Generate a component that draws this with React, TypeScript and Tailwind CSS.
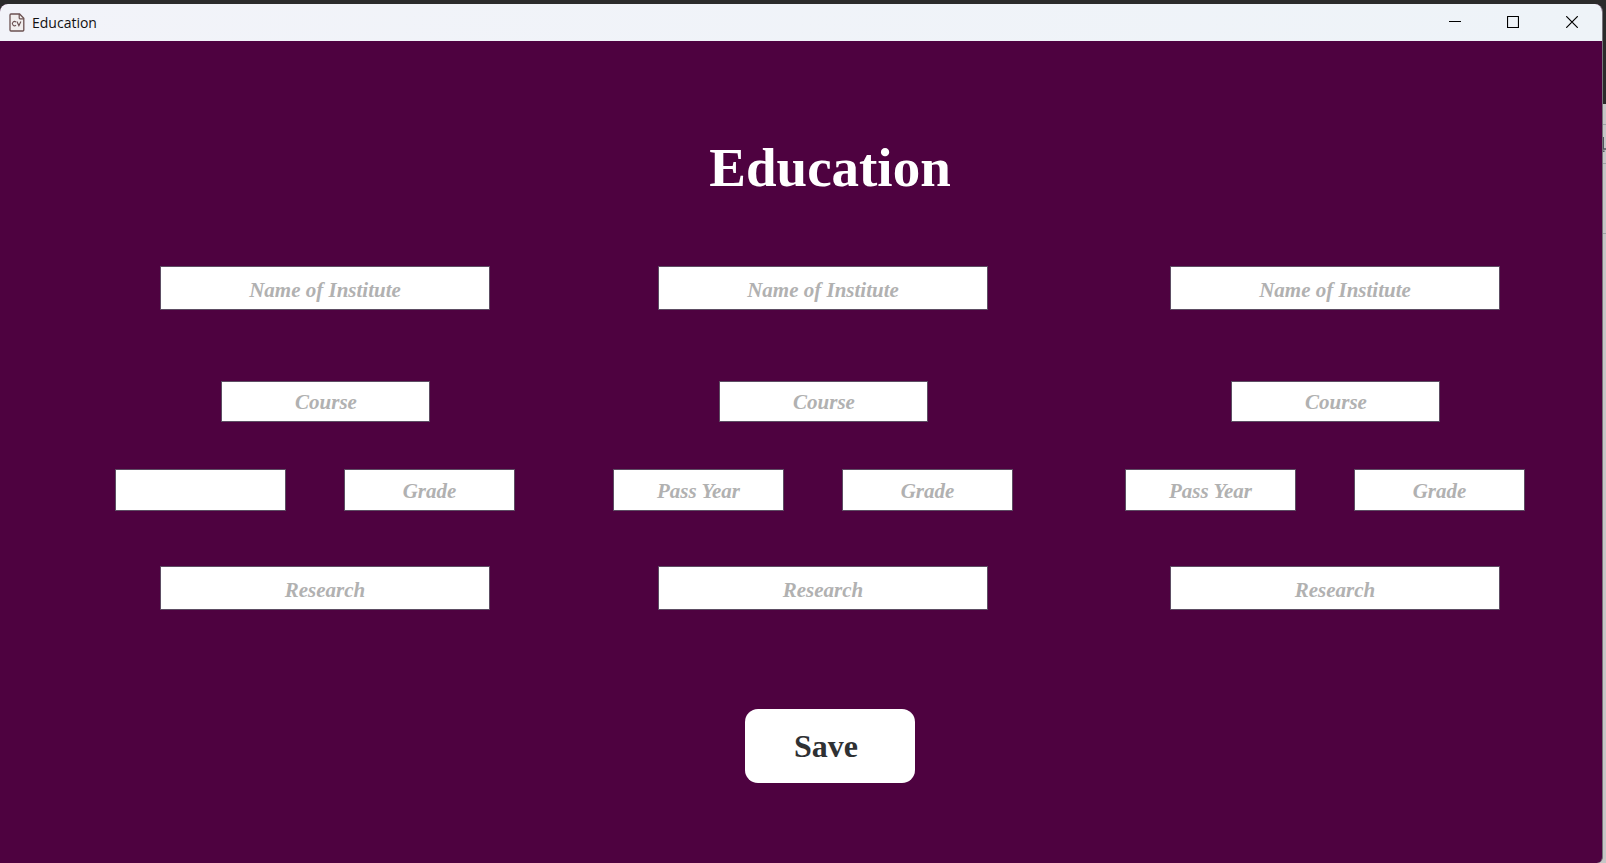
import { useState } from "react";
import type { InputHTMLAttributes } from "react";

type FieldProps = InputHTMLAttributes<HTMLInputElement> & { label: string };

function Field({ label, className = "", ...rest }: FieldProps) {
  return (
    <input
      type="text"
      aria-label={label}
      placeholder={label}
      className={`block border border-[#5d4d63] bg-white text-center font-['Liberation_Serif',serif] text-[21px] font-bold text-[#333333] italic outline-none placeholder:text-[#b1b1b1] placeholder:opacity-100 ${className}`}
      {...rest}
    />
  );
}

function EducationEntry({ index, activeYear = false }: { index: number; activeYear?: boolean }) {
  return (
    <fieldset className="flex w-[420px] flex-col items-center" aria-label={`Education ${index}`}>
      <Field label="Name of Institute" className="h-11 w-[330px] pt-1" />
      <Field label="Course" className="mt-[71px] h-[41px] w-[209px] pt-0.5 pl-0.5" />
      <div className="mt-[47px] flex gap-[58px] self-start">
        <Field
          label="Pass Year"
          placeholder={activeYear ? "" : "Pass Year"}
          className="h-[42px] w-[171px] pt-0.5"
        />
        <Field label="Grade" className="h-[42px] w-[171px] pt-0.5" />
      </div>
      <Field label="Research" className="mt-[55px] h-11 w-[330px] pt-1" />
    </fieldset>
  );
}

function DocumentIcon() {
  return (
    <svg width="16" height="19" viewBox="0 0 16 19" fill="none" stroke="#6b5151" aria-hidden="true">
      <path
        d="M2 1h8.600L14.800 5.200V17a1 1 0 0 1-1 1H2a1 1 0 0 1-1-1V2a1 1 0 0 1 1-1Z"
        fill="#f1eeee"
        strokeWidth="1.3"
      />
      <path d="M10.200 1v4a.8.8 0 0 0 .8.8h3.800" strokeWidth="1.2" />
      <path d="M7 9.100a2.100 2.100 0 1 0 0 3M7.900 8.400l2 4.200 2-4.200" strokeWidth="1.1" />
    </svg>
  );
}

function TitleBar() {
  return (
    <header className="flex h-[37px] items-center justify-between bg-linear-to-r from-[#f2f3f9] to-[#eef3f8]">
      <div className="flex items-center gap-[7px] pl-[9px]">
        <DocumentIcon />
        <span className="font-['Open_Sans',sans-serif] text-sm leading-5 text-[#111111]">
          Education
        </span>
      </div>
      <div className="flex h-full pb-0.5 text-black">
        <button type="button" aria-label="Minimize" className="grid w-[58px] place-items-center">
          <svg width="12" height="12" viewBox="0 0 12 12" stroke="currentColor">
            <path d="M0 5.5h12" />
          </svg>
        </button>
        <button type="button" aria-label="Maximize" className="grid w-[58px] place-items-center">
          <svg width="12" height="12" viewBox="0 0 12 12" fill="none" stroke="currentColor">
            <rect x="0.5" y="0.5" width="11" height="11" rx="0.4" strokeWidth="1.2" />
          </svg>
        </button>
        <button type="button" aria-label="Close" className="grid w-[60px] place-items-center">
          <svg width="12" height="12" viewBox="0 0 12 12" stroke="currentColor" strokeWidth="1.2">
            <path d="M0.2 0.2l11.6 11.6M11.8 0.2L0.2 11.8" />
          </svg>
        </button>
      </div>
    </header>
  );
}

function Backdrop() {
  return (
    <div className="absolute inset-0 flex flex-col bg-[#c6c6c6]" aria-hidden="true">
      <div className="h-[104px] bg-[#2b2b2b]" />
      <div className="h-[21px] border-b border-[#9da2a5]" />
      <div className="flex h-[39px] items-center justify-end border-b border-[#9da2a5]">
        <svg width="4" height="16" viewBox="0 0 4 16" fill="none" stroke="#50555d">
          <path d="M1.200 1v12M1 13h3M1 15.300h1.500" strokeWidth="1.600" />
        </svg>
      </div>
      <div className="h-[70px] border-b border-[#9da2a5]" />
    </div>
  );
}

export default function App() {
  const [saved, setSaved] = useState(false);

  return (
    <div className="relative flex min-h-screen flex-col overflow-hidden pt-1 pr-[3px]">
      <Backdrop />
      <div className="relative flex flex-1 flex-col overflow-hidden rounded-t-lg rounded-br-md border-r border-[#77737a] bg-[#4e0240]">
        <TitleBar />
        <form
          className="flex flex-1 flex-col pb-20"
          onSubmit={(event) => {
            event.preventDefault();
            setSaved(true);
          }}
          data-saved={saved}
        >
          <h1 className="mt-[94px] pl-[58px] text-center font-['Liberation_Serif',serif] text-[55px] leading-[66px] font-bold text-white">
            Education
          </h1>
          <div className="mt-[65px] grid grid-cols-[498fr_512fr_477fr] pl-[115px]">
            <EducationEntry index={1} activeYear />
            <EducationEntry index={2} />
            <EducationEntry index={3} />
          </div>
          <div className="mt-[99px] flex justify-center pl-[58px]">
            <button
              type="submit"
              className="h-[74px] w-[170px] rounded-[13px] bg-white pr-2 font-['Liberation_Serif',serif] text-[32px] font-bold text-[#2f3133]"
            >
              Save
            </button>
          </div>
        </form>
      </div>
    </div>
  );
}
